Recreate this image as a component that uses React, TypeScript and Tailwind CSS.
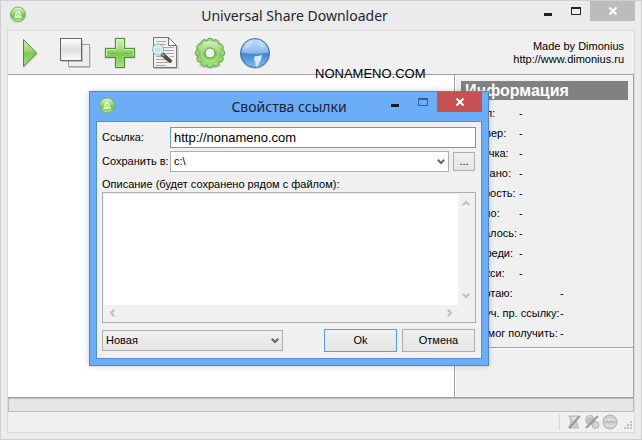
import type { ReactNode } from "react"
import clsx from "clsx"

const shortInfo = [
  "Файл:",
  "Сервер:",
  "Закачка:",
  "Скачано:",
  "Скорость:",
  "Число:",
  "Осталось:",
  "Очереди:",
  "Прокси:",
]
const longInfo = ["Работаю:", "Получ. пр. ссылку:", "Не смог получить:"]

function AppIcon() {
  return (
    <svg width="18" height="18" viewBox="0 0 18 18">
      <defs>
        <linearGradient id="appGreen" x1="0" y1="0" x2="0" y2="1">
          <stop offset="0" stopColor="#e4f6d8" />
          <stop offset="0.45" stopColor="#8ed468" />
          <stop offset="0.6" stopColor="#6cc342" />
          <stop offset="1" stopColor="#b5ea92" />
        </linearGradient>
      </defs>
      <circle cx="9" cy="9.500" r="7.500" fill="url(#appGreen)" stroke="#7fae66" />
      <path d="M6 12 7.500 7.500 9 6.500l1.500 1L12 12z" fill="none" stroke="#f4fff0" strokeWidth="1.300" strokeLinejoin="round" />
      <circle cx="9" cy="10" r="1" fill="#f4fff0" />
    </svg>
  )
}

function PlayIcon() {
  return (
    <svg width="32" height="32" viewBox="0 0 32 32">
      <defs>
        <linearGradient id="green" x1="0" y1="0" x2="0" y2="1">
          <stop offset="0" stopColor="#d5f0c3" />
          <stop offset="0.45" stopColor="#93d36c" />
          <stop offset="0.5" stopColor="#7cc653" />
          <stop offset="1" stopColor="#a4e27c" />
        </linearGradient>
      </defs>
      <path d="M10 4 24 17.500 10 31z" fill="#000" opacity="0.15" />
      <path d="M9.500 2.500 22.500 16 9.500 29.500z" fill="url(#green)" stroke="#4d9231" strokeLinejoin="round" />
    </svg>
  )
}

function CopyIcon() {
  return (
    <svg width="32" height="32" viewBox="0 0 32 32">
      <defs>
        <linearGradient id="sheet" x1="0" y1="0" x2="0" y2="1">
          <stop offset="0" stopColor="#fff" />
          <stop offset="0.5" stopColor="#dedede" />
          <stop offset="1" stopColor="#fbfbfb" />
        </linearGradient>
      </defs>
      <path d="M10 30.500h21V9" fill="none" stroke="#c2c2c2" />
      <rect x="9.500" y="7.500" width="21" height="22" fill="#ededed" stroke="#a3a5a0" />
      <rect x="3" y="3" width="21" height="22" fill="#000" opacity="0.2" />
      <rect x="1.500" y="1.500" width="21" height="22" fill="url(#sheet)" stroke="#63695b" />
    </svg>
  )
}

function PlusIcon() {
  const shape = "M11.500 1.500h9v10h10v9h-10v10h-9v-10h-10v-9h10z"
  return (
    <svg width="32" height="32" viewBox="0 0 32 32">
      <path d={shape} fill="none" stroke="#000" strokeWidth="2" opacity="0.16" />
      <path d={shape} fill="url(#green)" stroke="#4e9034" />
      <path d="M12.500 11.500v-9h7v9M2.500 19v-6.500h9M20.500 12.500h9V19" fill="none" stroke="#dff5d1" opacity="0.8" />
    </svg>
  )
}

function SearchDocIcon() {
  return (
    <svg width="32" height="32" viewBox="0 0 32 32">
      <path d="M5 31.500h24V9" fill="none" stroke="#b9b9b9" />
      <path d="M4.500.500h15l8 8v22h-23z" fill="#f1f1f1" stroke="#72766c" />
      <path d="M19.500.500v8h8z" fill="#fff" stroke="#72766c" strokeLinejoin="round" />
      <path
        d="M7 4.500h10M7 7.500h10M13 10.500h12M15 13.500h10M15 16.500h10M7 19.500h9M21 19.500h4M7 22.500h11M7 25.500h12M7 28.500h10"
        stroke="#a7aaa3"
      />
      <path d="m13 17 8 7" stroke="#4e504b" strokeWidth="4" strokeLinecap="round" />
      <path d="m12 16 3 3" stroke="#999" strokeWidth="2" />
      <circle cx="9" cy="12.500" r="5.500" fill="#c5edfa" stroke="#929b9e" />
      <circle cx="9" cy="12.500" r="4.500" fill="none" stroke="#edfaff" />
      <path d="M6 11.500h6M6 13.500h6" stroke="#8bd8f2" strokeDasharray="1 1" />
    </svg>
  )
}

function GearIcon() {
  const turns = [0, 30, 60, 90, 120, 150, 180, 210, 240, 270, 300, 330]
  return (
    <svg width="32" height="32" viewBox="0 0 32 32">
      <ellipse cx="16" cy="28.500" rx="11" ry="3" fill="#000" opacity="0.15" />
      {turns.map((turn) => (
        <path
          key={turn}
          d="M12.500 5.500 13.500 2q2.500-1.500 5 0l1 3.500z"
          transform={`rotate(${turn} 16 16)`}
          fill="#9dd87c"
          stroke="#62a743"
          strokeLinejoin="round"
        />
      ))}
      <circle cx="16" cy="16" r="12" fill="url(#green)" />
      <circle cx="16" cy="16" r="8.500" fill="none" stroke="#b9e9a0" strokeWidth="2" opacity="0.5" />
      <circle cx="16" cy="16" r="5" fill="#f0f0f0" stroke="#5b9e3f" />
    </svg>
  )
}

function GlobeIcon() {
  return (
    <svg width="32" height="32" viewBox="0 0 32 32">
      <defs>
        <linearGradient id="blue" x1="0" y1="0" x2="0" y2="1">
          <stop offset="0" stopColor="#b5d5f5" />
          <stop offset="0.46" stopColor="#74ace6" />
          <stop offset="0.54" stopColor="#4686d2" />
          <stop offset="1" stopColor="#7fbcf7" />
        </linearGradient>
      </defs>
      <circle cx="16" cy="17" r="15" fill="#000" opacity="0.18" />
      <circle cx="16" cy="16" r="14.500" fill="url(#blue)" stroke="#3d6fab" />
      <path d="M3 15C4 7 9 3 16 3s12 4 13 12c-8 3-18 3-26 0z" fill="#fff" opacity="0.2" />
      <path d="m7 7 4-3 4 1-3 3-2 3-4 1zM19 5l5 2 2 4-4-1-3-2z" fill="#fff" opacity="0.25" />
      <path d="M16 19h3l4-1-1 5-2 3-1 3-2 1-1-5-1-3z" fill="#d6eafc" />
    </svg>
  )
}

const tools: { name: string; icon: ReactNode }[] = [
  { name: "Старт", icon: <PlayIcon /> },
  { name: "Копировать", icon: <CopyIcon /> },
  { name: "Добавить", icon: <PlusIcon /> },
  { name: "Журнал", icon: <SearchDocIcon /> },
  { name: "Настройки", icon: <GearIcon /> },
  { name: "Сайт", icon: <GlobeIcon /> },
]

function CaptionButtons({ dialog = false }: { dialog?: boolean }) {
  return (
    <div className="flex h-5">
      <button aria-label="Свернуть" className="grid w-7 place-items-center">
        <svg width="12" height="12" viewBox="0 0 12 12">
          <path d="M2 8h8v3H2z" fill={dialog ? "#1b1b1b" : "#222"} />
        </svg>
      </button>
      <button aria-label="Развернуть" className="grid w-7 place-items-center">
        <svg width="12" height="12" viewBox="0 0 12 12" shapeRendering="crispEdges">
          <path
            d="M1 2h10v8H1zM2 4v5h8V4z"
            fillRule="evenodd"
            fill={dialog ? "#335f96" : "#222"}
          />
        </svg>
      </button>
      <button
        aria-label="Закрыть"
        className={clsx("grid w-[45px] place-items-center", dialog ? "bg-[#c75050]" : "bg-[#bcbcbc]")}
      >
        <svg width="8" height="8" viewBox="0 0 8 8">
          <path d="m.500.500 7 7m0-7-7 7" stroke="#fff" strokeWidth="2" />
        </svg>
      </button>
    </div>
  )
}

function Chevron({ className }: { className?: string }) {
  return (
    <svg width="8" height="6" viewBox="0 0 8 6" className={className}>
      <path d="m.800.800 3.200 3.200 3.200-3.200" fill="none" stroke="currentColor" strokeWidth="2" />
    </svg>
  )
}

function InfoPanel() {
  return (
    <aside className="flex w-[180px] shrink-0 flex-col border-x border-[#a0a0a0] bg-[#f0f0f0] shadow-[inset_1px_1px_0_#fff]">
      <div className="border-b border-[#a0a0a0] pt-1.5 pr-[5px] pb-1 pl-1.5 shadow-[0_1px_0_#fff]">
        <h2 className="mb-[3px] bg-[#808280] px-1 text-base leading-[19px] font-bold text-white">Информация</h2>
        <dl>
          {shortInfo.map((label) => (
            <div key={label} className="flex h-5 items-center px-1">
              <dt className="w-[54px] whitespace-nowrap">{label}</dt>
              <dd>-</dd>
            </div>
          ))}
          {longInfo.map((label) => (
            <div key={label} className="flex h-5 items-center px-1">
              <dt className="w-[95px] whitespace-nowrap">{label}</dt>
              <dd>-</dd>
            </div>
          ))}
        </dl>
      </div>
    </aside>
  )
}

function StatusBar() {
  return (
    <footer className="flex h-5 items-center justify-end">
      <div className="flex h-4 items-center gap-0.5 border-l border-[#d7d7d7] pl-1.5">
        <svg width="16" height="16" viewBox="0 0 16 16">
          <path d="M3 2h9l-2 5 3 7H3l2-6z" fill="#cbcbcb" stroke="#bcbcbc" />
          <path d="M5 3h6l-3 4z" fill="#e4e4e4" />
          <path d="M3 14 14 2" stroke="#999" strokeWidth="2" />
        </svg>
        <svg width="16" height="16" viewBox="0 0 16 16">
          <circle cx="6" cy="6" r="5" fill="#c0c0c0" />
          <path d="M3 4c2-2 4-2 5 0" fill="none" stroke="#e5e5e5" />
          <circle cx="11.500" cy="11" r="3.500" fill="#d6d6d6" stroke="#b2b2b2" />
          <path d="M2 14 14 2" stroke="#999" strokeWidth="2" />
        </svg>
        <svg width="16" height="16" viewBox="0 0 16 16">
          <circle cx="8" cy="8" r="7" fill="#d0d0d0" stroke="#adadad" />
          <path d="M3 5.500h10M3 11.500h10" stroke="#e4e4e4" />
          <path d="m3 9 2-2 2 2 2-2 2 2 2-2" fill="none" stroke="#b0b0b0" />
        </svg>
      </div>
      <svg width="16" height="16" viewBox="0 0 16 16" className="self-end" fill="#bfbfbf">
        <path d="M12 5h2v2h-2zM12 8h2v2h-2zM9 8h2v2H9zM12 11h2v2h-2zM9 11h2v2H9zM6 11h2v2H6z" />
      </svg>
    </footer>
  )
}

function LinkDialog() {
  return (
    <section
      role="dialog"
      aria-labelledby="dialog-title"
      className="absolute top-[90px] left-[88px] w-[400px] border border-[#4a86c8] bg-[#6badf6] px-1.5 pb-1.5 shadow-[0_0_6px_rgba(0,0,0,0.2)]"
    >
      <header className="grid h-[29px] grid-cols-[1fr_auto_1fr]">
        <div className="pt-1 pl-0.5">
          <AppIcon />
        </div>
        <h2 id="dialog-title" className="pt-1 font-['Noto_Sans'] text-[14px] leading-[22px] text-[#1d2430]">
          Свойства ссылки
        </h2>
        <div className="flex justify-end">
          <CaptionButtons dialog />
        </div>
      </header>
      <form className="border border-[#5590d0] bg-[#f0f0f0] px-[5px] pt-[5px] pb-1.5">
        <div className="grid grid-cols-[68px_1fr] gap-y-[3px]">
          <label htmlFor="link" className="self-center">
            Ссылка:
          </label>
          <input
            id="link"
            defaultValue="http://nonameno.com"
            className="h-[21px] min-w-0 border border-[#569de5] bg-white px-[3px] text-[13px] outline-none"
          />
          <label htmlFor="folder" className="self-center whitespace-nowrap">
            Сохранить в:
          </label>
          <div className="flex items-center gap-1 pr-px">
            <div className="relative flex-1">
              <select
                id="folder"
                className="block h-[21px] w-full appearance-none border border-[#abadb3] bg-white px-[3px]"
              >
                <option>c:\</option>
              </select>
              <Chevron className="pointer-events-none absolute top-2 right-1 text-[#606a5c]" />
            </div>
            <button type="button" className="h-[19px] w-[22px] border border-[#acacac] bg-linear-to-b from-[#f0f0f0] to-[#e5e5e5]">
              ...
            </button>
          </div>
        </div>
        <label htmlFor="notes" className="mt-1 block leading-4">
          Описание (будет сохранено рядом с файлом):
        </label>
        <div className="grid grid-cols-[1fr_16px] grid-rows-[111px_16px] border border-[#abadb3] bg-[#f0f0f0] p-px">
          <textarea id="notes" className="resize-none bg-white p-1 outline-none" />
          <div className="flex flex-col items-center justify-between py-1.5 text-[#bfbfbf]">
            <Chevron className="rotate-180" />
            <Chevron />
          </div>
          <div className="flex items-center justify-between px-1 text-[#bfbfbf]">
            <Chevron className="rotate-90" />
            <Chevron className="-rotate-90" />
          </div>
        </div>
        <div className="mt-1.5 flex items-center gap-[5px] pr-px">
          <div className="relative mr-9 flex-1">
            <select
              aria-label="Группа"
              className="block h-[21px] w-full appearance-none border border-[#acacac] bg-linear-to-b from-[#f0f0f0] to-[#e5e5e5] px-[3px]"
            >
              <option>Новая</option>
            </select>
            <Chevron className="pointer-events-none absolute top-2 right-1 text-[#606a5c]" />
          </div>
          <button type="button" className="h-[23px] w-[73px] border border-[#569de5] bg-linear-to-b from-[#f0f0f0] to-[#e5e5e5]">
            Ok
          </button>
          <button type="button" className="h-[23px] w-[73px] border border-[#acacac] bg-linear-to-b from-[#f0f0f0] to-[#e5e5e5]">
            Отмена
          </button>
        </div>
      </form>
    </section>
  )
}

export default function App() {
  return (
    <div className="relative flex h-screen flex-col overflow-hidden border border-[#cfcfcf] bg-[#ebebeb] px-1.5 pb-1.5 font-['Liberation_Sans',sans-serif] text-[11px] text-black">
      <header className="flex h-[29px] shrink-0">
        <div className="w-12 pt-1 pl-0.5">
          <AppIcon />
        </div>
        <h1 className="flex-1 pt-1 text-center font-['Noto_Sans'] text-[14px] leading-[22px] text-[#26262c]">
          Universal Share Downloader
        </h1>
        <CaptionButtons />
      </header>
      <main className="flex min-h-0 flex-1 flex-col border border-[#dadada] bg-[#f0f0f0]">
        <div className="flex h-11 shrink-0 items-center justify-between border-b border-[#a0a0a0] pr-2.5 pl-1.5">
          <div className="flex gap-[13px]">
            {tools.map((tool) => (
              <button key={tool.name} aria-label={tool.name}>
                {tool.icon}
              </button>
            ))}
          </div>
          <p className="text-right leading-[13px]">
            Made by Dimonius
            <br />
            <a href="http://www.dimonius.ru">http://www.dimonius.ru</a>
          </p>
        </div>
        <div className="flex min-h-0 flex-1 border-b border-[#a0a0a0]">
          <div className="flex-1 bg-white" />
          <InfoPanel />
        </div>
        <div className="h-3.5 shrink-0 border border-[#bcbcbc] bg-[#e6e6e6]" />
        <StatusBar />
      </main>
      <p className="absolute top-[65px] left-[314px] text-[13px] leading-4">NONAMENO.COM</p>
      <LinkDialog />
    </div>
  )
}
